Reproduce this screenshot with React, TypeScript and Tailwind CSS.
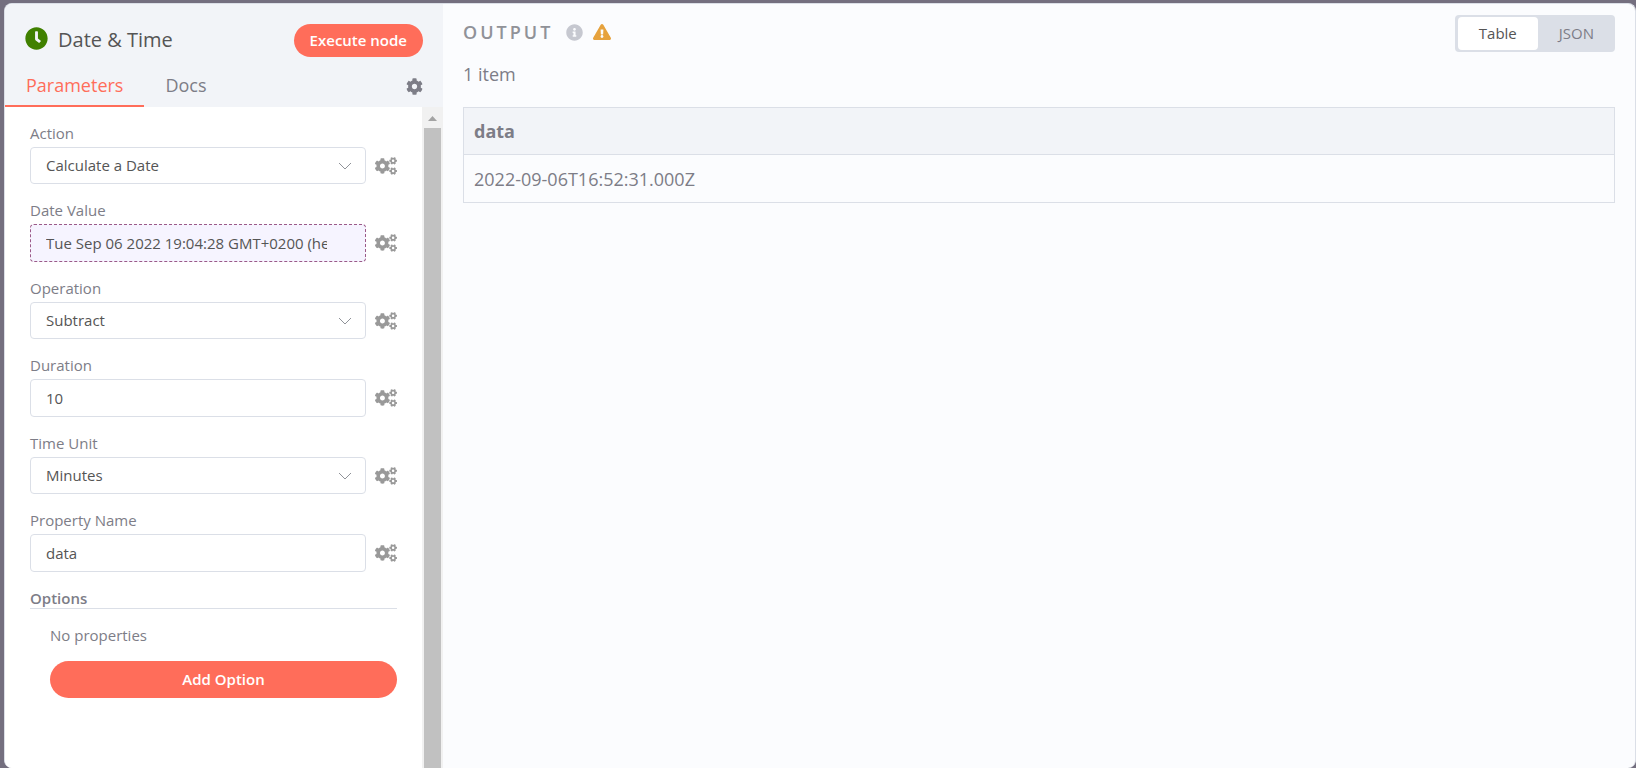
import React, { useState } from 'react';
import { FaClock, FaCog, FaCogs, FaExclamationTriangle, FaInfoCircle } from 'react-icons/fa';

type Parameter = {
    id: string;
    label: string;
    value: string;
    kind: 'select' | 'text' | 'expression';
    options?: string[];
};

const parameters: Parameter[] = [
    { id: 'action', label: 'Action', value: 'Calculate a Date', kind: 'select', options: ['Calculate a Date', 'Format a Date'] },
    { id: 'value', label: 'Date Value', value: 'Tue Sep 06 2022 19:04:28 GMT+0200 (he', kind: 'expression' },
    { id: 'operation', label: 'Operation', value: 'Subtract', kind: 'select', options: ['Add', 'Subtract'] },
    { id: 'duration', label: 'Duration', value: '10', kind: 'text' },
    { id: 'timeUnit', label: 'Time Unit', value: 'Minutes', kind: 'select', options: ['Minutes', 'Hours', 'Days'] },
    { id: 'propertyName', label: 'Property Name', value: 'data', kind: 'text' },
];

const rows = [{ data: '2022-09-06T16:52:31.000Z' }];

const ParameterField: React.FC<{ parameter: Parameter }> = ({ parameter }) => {
    const { id, label, value, kind, options } = parameter;

    return (
        <div>
            <label htmlFor={id} className="mb-1 block text-[15px] leading-5 text-[#7d7d87]">{label}</label>
            <div className="flex items-center gap-[9px]">
                {kind === 'select' && (
                    <div className="relative min-w-0 flex-1">
                        <select
                            id={id}
                            defaultValue={value}
                            className="block h-[37px] w-full appearance-none rounded border border-[#dbdfe7] bg-white px-[15px] text-[15px] text-[#555]"
                        >
                            {options?.map((option) => <option key={option}>{option}</option>)}
                        </select>
                        <svg className="pointer-events-none absolute top-[15px] right-[14px] h-2 w-[14px]" viewBox="0 0 14 8" fill="none" stroke="#909399">
                            <path d="M1 1l6 6 6-6" />
                        </svg>
                    </div>
                )}
                {kind === 'text' && (
                    <input
                        id={id}
                        defaultValue={value}
                        className="h-[38px] min-w-0 flex-1 rounded border border-[#dbdfe7] bg-white px-[15px] text-[15px] text-[#555]"
                    />
                )}
                {kind === 'expression' && (
                    <input
                        id={id}
                        defaultValue={value}
                        className="h-[38px] min-w-0 flex-1 rounded border border-dashed border-[#9b5a88] bg-[#f6f4ff] pr-[38px] pl-[15px] text-[15px] text-[#555]"
                    />
                )}
                <button aria-label={`${label} options`} className="text-[#999]">
                    <FaCogs className="h-[18px] w-[22px]" />
                </button>
            </div>
        </div>
    );
};

const App: React.FC = () => {
    const [activeTab, setActiveTab] = useState('Parameters');
    const [displayMode, setDisplayMode] = useState('Table');

    return (
        <div className="h-screen bg-[#746f7f] pt-[3px] pl-1 font-['Open_Sans',sans-serif]">
            <div className="flex h-full overflow-hidden rounded-lg border border-b-0 border-[#dbdfe7] bg-[#fbfcfe]">
                {/* node settings */}
                <section className="flex w-[438px] shrink-0 flex-col bg-white">
                    <header className="bg-[#f2f4f8] pr-5">
                        <div className="flex h-[33px] items-center mt-5 pl-5">
                            <FaClock className="mb-1 size-[23px] text-[#408000]" />
                            <h1 className="mb-[2px] ml-[10px] flex-1 text-xl font-medium text-[#555]">Date &amp; Time</h1>
                            <button className="h-[33px] rounded-full bg-[#ff6d5a] px-4 text-[15px] font-semibold text-white">Execute node</button>
                        </div>
                        <nav className="mt-2 flex items-center">
                            {['Parameters', 'Docs'].map((tab) => (
                                <button
                                    key={tab}
                                    onClick={() => setActiveTab(tab)}
                                    className={`h-[42px] border-b-2 px-[21px] text-lg font-medium ${activeTab === tab ? 'border-[#ff6d5a] text-[#ff6d5a]' : 'border-transparent text-[#7d7d87]'}`}
                                >
                                    {tab}
                                </button>
                            ))}
                            <button aria-label="Settings" className="ml-auto text-[#7d7d87]">
                                <FaCog className="size-[17px]" />
                            </button>
                        </nav>
                    </header>

                    <div className="flex min-h-0 flex-1">
                        <div className="min-w-0 flex-1 overflow-hidden px-[25px] pt-4">
                            <div className="flex flex-col gap-4">
                                {parameters.map((parameter) => (
                                    <ParameterField key={parameter.id} parameter={parameter} />
                                ))}
                            </div>
                            <h2 className="mt-4 border-b border-[#dbdfe7] text-[15px] leading-5 font-semibold text-[#7d7d87]">Options</h2>
                            <div className="pt-4 pl-5">
                                <p className="text-[15px] leading-5 text-[#7d7d87]">No properties</p>
                                <button className="mt-4 h-[37px] w-full rounded-full bg-[#ff6d5a] text-[15px] font-semibold text-white">Add Option</button>
                            </div>
                        </div>
                        {/* scrollbar */}
                        <div className="flex w-[21px] flex-col items-center bg-[#f1f1f1]">
                            <svg className="mt-[9px] mb-[7px] h-[5px] w-[9px] shrink-0" viewBox="0 0 9 5" fill="#a3a3a3">
                                <path d="M0 5L4.5 0 9 5z" />
                            </svg>
                            <div className="w-[17px] flex-1 bg-[#c1c1c1]" />
                        </div>
                    </div>
                </section>

                {/* output */}
                <section className="min-w-0 flex-1 px-5 pt-[11px]">
                    <div className="flex items-start justify-between">
                        <div className="flex h-[34px] items-center">
                            <h2 className="text-lg font-semibold tracking-[3px] text-[#909298]">OUTPUT</h2>
                            <FaInfoCircle className="ml-[13px] size-[17px] text-[#c6c8d0]" />
                            <FaExclamationTriangle className="ml-[10px] h-4 w-[18px] text-[#e6a23d]" />
                        </div>
                        <div className="flex h-[37px] rounded bg-[#dbdfe7] py-[2px] pl-[3px]">
                            {['Table', 'JSON'].map((mode) => (
                                <button
                                    key={mode}
                                    onClick={() => setDisplayMode(mode)}
                                    className={`rounded px-[21px] text-[15px] font-medium ${displayMode === mode ? 'bg-white text-[#555]' : 'text-[#7d7d87]'}`}
                                >
                                    {mode}
                                </button>
                            ))}
                        </div>
                    </div>
                    <p className="mt-2 text-lg text-[#7d7d87]">1 item</p>
                    <table className="mt-[19px] w-full border-collapse text-left text-lg text-[#7d7d87]">
                        <thead>
                            <tr className="h-[47px] bg-[#f2f4f8]">
                                <th className="border border-[#dbdfe7] px-[10px] font-bold">data</th>
                            </tr>
                        </thead>
                        <tbody>
                            {rows.map((row) => (
                                <tr key={row.data} className="h-12">
                                    <td className="border border-[#dbdfe7] px-[10px]">{row.data}</td>
                                </tr>
                            ))}
                        </tbody>
                    </table>
                </section>
            </div>
        </div>
    );
};

export default App;
